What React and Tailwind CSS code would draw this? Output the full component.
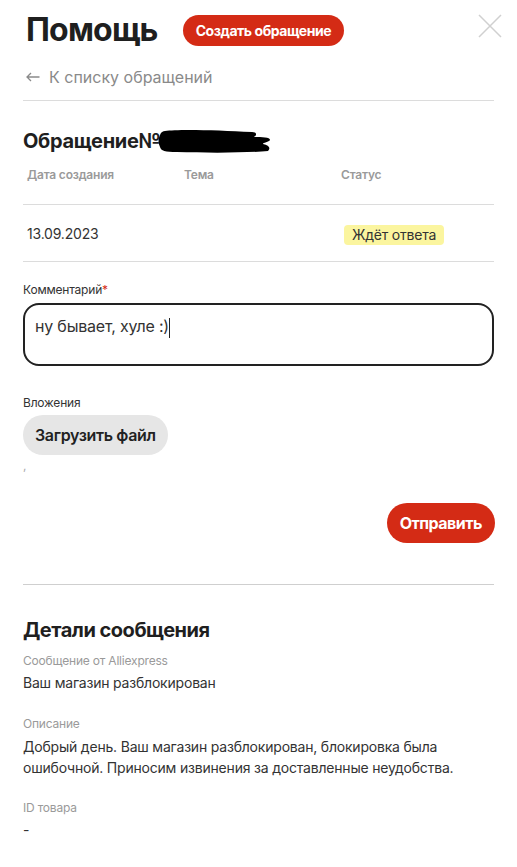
import React from "react";

export default function App() {
  return (
    <div className="min-h-[867px] w-full bg-white text-[#333] tracking-[-0.2px] font-['Inter','Noto_Sans',sans-serif]">
      <div className="px-[23px]">
        {/* header */}
        <div className="flex items-start pt-[10px]">
          <h1 className="ml-[3px] text-[32px] leading-[40px] font-bold text-[#1f1f1f] tracking-[-0.8px]">Помощь</h1>
          <button className="ml-[25px] mt-[5px] h-[31px] rounded-full bg-[#d42b15] px-[13px] text-[14px] font-bold text-white tracking-[-0.45px]">
            Создать обращение
          </button>
          <div className="ml-auto mr-[-8px] mt-[4px]">
            <svg width="24" height="24" viewBox="0 0 24 24" className="block">
              <path d="M1 1 L23 23 M23 1 L1 23" stroke="#d0d0d0" strokeWidth="1.5" fill="none" />
            </svg>
          </div>
        </div>

        <div className="mt-[15px] flex items-center pb-[11px] border-b border-[#dcdcdc] text-[16px] leading-[24px] text-[#8a8a8a] tracking-normal">
          <svg width="14" height="10" viewBox="0 0 14 10" className="ml-[3px] mr-[9px]">
            <path d="M13.5 5 H1 M5 1 L1 5 L5 9" stroke="#8a8a8a" strokeWidth="1.3" fill="none" />
          </svg>
          <span>К списку обращений</span>
        </div>

        <div className="mt-[26px] flex items-center">
          <span className="text-[20px] leading-[28px] font-bold text-[#1f1f1f] tracking-[-0.3px]">Обращение№</span>
          <svg width="115" height="26" viewBox="0 0 115 26" className="ml-[-3px] mt-[1px]">
            <path d="M8 2 C20 0 60 1 95 3 C100 3 100 6 97 8 C105 8 113 8 113 11 C112 13 105 14 106 15 C112 16 114 19 111 22 C90 24 50 24 20 23 C8 23 4 22 3 18 C1 14 1 10 3 6 C4 3 6 2 8 2 Z" fill="#000" />
          </svg>
        </div>

        {/* table */}
        <div className="mt-[12px] grid grid-cols-3 pb-[21px] border-b border-[#dcdcdc] text-[12px] leading-[16px] font-semibold text-[#9a9a9a]">
          <div className="pl-[4px]">Дата создания</div>
          <div className="pl-[4px]">Тема</div>
          <div className="pl-[4px]">Статус</div>
        </div>
        <div className="grid grid-cols-3 h-[57px] items-center border-b border-[#dcdcdc] text-[14px]">
          <div className="pl-[4px] text-[#333]">13.09.2023</div>
          <div className="pl-[4px]"></div>
          <div className="pl-[7px] pt-[3px]">
            <span className="inline-block rounded-[4px] bg-[#fbf59f] px-[8px] leading-[20px] text-[#333]">Ждёт ответа</span>
          </div>
        </div>

        {/* comment */}
        <div className="mt-[20px] text-[12px] leading-[16px] text-[#333]">
          Комментарий<span className="text-[#d42b15]">*</span>
        </div>
        <div className="mt-[5px] h-[63px] rounded-[16px] border-2 border-[#222] pl-[10px] pt-[9px] text-[16px] leading-[24px] text-[#333]">
          ну бывает, хуле :)<span className="inline-block w-[1px] h-[20px] bg-[#222] align-middle"></span>
        </div>

        <div className="mt-[29px] text-[12px] leading-[16px] text-[#333]">Вложения</div>
        <button className="mt-[4px] h-[40px] rounded-full bg-[#e6e6e6] px-[12px] text-[16px] font-semibold text-[#222] tracking-[-0.35px]">
          Загрузить файл
        </button>
        <div className="mt-[3px] text-[12px] leading-[16px] text-[#aaa]">,</div>

        <div className="mt-[29px] flex justify-end">
          <button className="mr-[-1px] h-[40px] rounded-full bg-[#d42b15] px-[13px] text-[16px] font-bold text-white tracking-[-0.5px]">
            Отправить
          </button>
        </div>

        <div className="mt-[41px] border-b border-[#cfcfcf]"></div>

        {/* details */}
        <h2 className="mt-[31px] text-[20px] leading-[28px] font-bold text-[#1f1f1f] tracking-[-0.5px]">Детали сообщения</h2>
        <div className="mt-[9px] text-[12px] leading-[16px] text-[#9a9a9a]">Сообщение от Alliexpress</div>
        <div className="mt-[4px] text-[14px] leading-[20px] text-[#333]">Ваш магазин разблокирован</div>

        <div className="mt-[23px] text-[12px] leading-[16px] text-[#9a9a9a]">Описание</div>
        <div className="mt-[4px] text-[14px] leading-[21px] text-[#333]">
          Добрый день. Ваш магазин разблокирован, блокировка была ошибочной. Приносим извинения за доставленные неудобства.
        </div>

        <div className="mt-[22px] text-[12px] leading-[16px] text-[#9a9a9a]">ID товара</div>
        <div className="mt-[4px] text-[14px] leading-[20px] text-[#333]">-</div>
      </div>
    </div>
  );
}
